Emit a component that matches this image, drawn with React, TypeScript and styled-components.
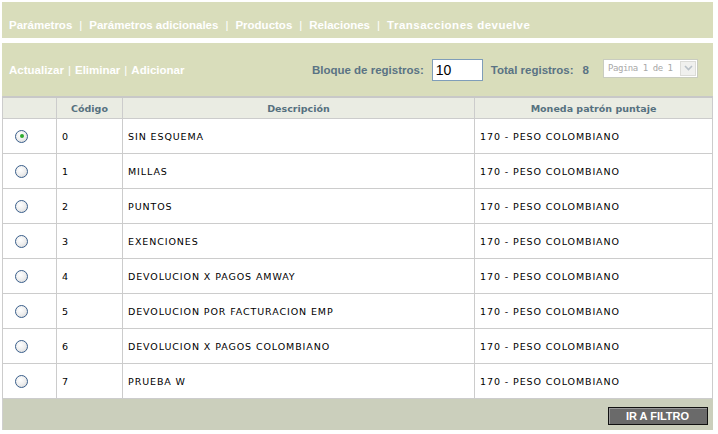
import React from "react";
import styled, { createGlobalStyle } from "styled-components";

const Global = createGlobalStyle`
  html, body { margin: 0; padding: 0; background: #ffffff; }
  body { font-family: "DejaVu Sans", Verdana, sans-serif; }
`;

const Page = styled.div`
  width: 711px;
  padding: 2px 0 0 2px;
  display: flex;
  flex-direction: column;
`;

const NavBar = styled.div`
  height: 36px;
  box-sizing: border-box;
  padding: 9px 0 0 7px;
  background: #d9ddbb;
  display: flex;
  align-items: center;
  font-family: "Liberation Sans", Arial, sans-serif;
  font-weight: bold;
  font-size: 11.5px;
  color: #ffffff;
  white-space: nowrap;
`;

const NavItem = styled.span<{ $wide?: boolean }>`
  letter-spacing: ${(p) => (p.$wide ? "0.5px" : "0")};
`;

const Sep = styled.span<{ $gap: number }>`
  margin: 0 ${(p) => p.$gap}px;
  font-weight: normal;
`;

const ToolBar = styled.div`
  margin-top: 5px;
  height: 53px;
  background: #d9ddbb;
  display: flex;
  align-items: center;
  padding-left: 7px;
  font-family: "Liberation Sans", Arial, sans-serif;
  font-weight: bold;
  font-size: 11.5px;
  white-space: nowrap;
`;

const Actions = styled.div`
  color: #ffffff;
  display: flex;
  align-items: center;
  flex: 1;
`;

const Label = styled.span`
  color: #5a7384;
  margin-right: 6px;
`;

const BlockInput = styled.input`
  width: 51px;
  height: 22px;
  box-sizing: border-box;
  border: 1px solid #7f9db9;
  padding: 0 3px;
  font-family: "Liberation Sans", Arial, sans-serif;
  font-size: 14px;
  color: #000;
  margin: 0 8px 0 2px;
  outline: none;
`;

const Count = styled.span`
  color: #5a7384;
  margin-left: 3px;
  margin-right: 14px;
`;

const PageSelect = styled.div`
  width: 95px;
  height: 19px;
  box-sizing: border-box;
  border: 1px solid #c9ccc0;
  background: #ffffff;
  display: flex;
  align-items: center;
  justify-content: space-between;
  font-family: "DejaVu Sans Mono", monospace;
  font-weight: normal;
  font-size: 9px;
  letter-spacing: -0.45px;
  color: #a8a8a8;
  padding-left: 4px;
  margin-right: 15px;
  margin-top: -3px;
  overflow: hidden;
`;

const Chevron = styled.div`
  width: 16px;
  height: 15px;
  flex: none;
  margin-right: 1px;
  background: #f0f0ee;
  border: 1px solid #dcdcd8;
  box-sizing: border-box;
  display: flex;
  align-items: center;
  justify-content: center;
`;

const Table = styled.table`
  width: 711px;
  border-collapse: collapse;
  table-layout: fixed;
  border-left: 1px solid #cfcfcf;
`;

const HeadCell = styled.th<{ $w?: number }>`
  ${(p) => (p.$w ? `width: ${p.$w}px;` : "")}
  height: 20px;
  background: #eaece3;
  border: 1px solid #cccccc;
  border-top: 2px solid #c8c8c8;
  font-family: "DejaVu Sans", Verdana, sans-serif;
  font-size: 9.5px;
  font-weight: bold;
  color: #56717f;
  text-align: center;
  padding: 0;
`;

const Cell = styled.td`
  height: 34px;
  border: 1px solid #cccccc;
  background: #ffffff;
  font-family: "DejaVu Sans", Verdana, sans-serif;
  font-size: 9.5px;
  letter-spacing: 0.9px;
  color: #000000;
  padding: 0 0 0 5px;
  white-space: nowrap;
`;

const RadioCell = styled.td`
  height: 34px;
  border: 1px solid #cccccc;
  background: #ffffff;
  text-align: left;
  padding: 0 0 0 12px;
`;

const Radio = styled.span<{ $on?: boolean }>`
  display: inline-block;
  width: 13px;
  height: 13px;
  box-sizing: border-box;
  border-radius: 50%;
  border: 1px solid #3a5f8c;
  background: radial-gradient(circle at 40% 35%, #ffffff 0%, #eeeeee 50%, #d2d2d2 100%);
  position: relative;
  vertical-align: middle;
  margin-top: -2px;
  &::after {
    content: "";
    display: ${(p) => (p.$on ? "block" : "none")};
    position: absolute;
    left: 3.5px;
    top: 3.5px;
    width: 4px;
    height: 4px;
    border-radius: 50%;
    background: #2eaa2e;
  }
`;

const FootCell = styled.td`
  height: 31px;
  background: #cbcfbc;
  text-align: right;
  padding: 0 5px 0 0;
`;

const FilterButton = styled.button`
  width: 100px;
  height: 18px;
  background: #6a6a6a;
  border: 1px solid #111111;
  box-shadow: inset 1px 1px 0 #9a9a9a;
  color: #ffffff;
  font-family: "Liberation Sans", Arial, sans-serif;
  font-weight: bold;
  font-size: 11px;
  padding: 0;
  cursor: pointer;
`;

const rows: [string, string][] = [
  ["0", "SIN ESQUEMA"],
  ["1", "MILLAS"],
  ["2", "PUNTOS"],
  ["3", "EXENCIONES"],
  ["4", "DEVOLUCION X PAGOS AMWAY"],
  ["5", "DEVOLUCION POR FACTURACION EMP"],
  ["6", "DEVOLUCION X PAGOS COLOMBIANO"],
  ["7", "PRUEBA W"],
];

const navItems = [
  "Parámetros",
  "Parámetros adicionales",
  "Productos",
  "Relaciones",
  "Transacciones devuelve",
];

export default function App() {
  return (
    <>
      <Global />
      <Page>
        <NavBar>
          {navItems.map((n, i) => (
            <React.Fragment key={n}>
              {i > 0 && <Sep $gap={7}>|</Sep>}
              <NavItem $wide={i === navItems.length - 1}>{n}</NavItem>
            </React.Fragment>
          ))}
        </NavBar>
        <ToolBar>
          <Actions>
            <span>Actualizar</span>
            <Sep $gap={4}>|</Sep>
            <span>Eliminar</span>
            <Sep $gap={4}>|</Sep>
            <span>Adicionar</span>
          </Actions>
          <Label>Bloque de registros:</Label>
          <BlockInput defaultValue="10" />
          <Label>Total registros:</Label>
          <Count>8</Count>
          <PageSelect>
            <span>Pagina 1 de 1</span>
            <Chevron>
              <svg width="9" height="6" viewBox="0 0 9 6">
                <path d="M1 1 L4.5 4.5 L8 1" fill="none" stroke="#b8c0c8" strokeWidth="1.6" />
              </svg>
            </Chevron>
          </PageSelect>
        </ToolBar>
        <Table>
          <thead>
            <tr>
              <HeadCell $w={53} />
              <HeadCell $w={65}>Código</HeadCell>
              <HeadCell $w={351}>Descripción</HeadCell>
              <HeadCell>Moneda patrón puntaje</HeadCell>
            </tr>
          </thead>
          <tbody>
            {rows.map(([code, desc], i) => (
              <tr key={code}>
                <RadioCell>
                  <Radio $on={i === 0} />
                </RadioCell>
                <Cell>{code}</Cell>
                <Cell>{desc}</Cell>
                <Cell>170 - PESO COLOMBIANO</Cell>
              </tr>
            ))}
            <tr>
              <FootCell colSpan={4}>
                <FilterButton>IR A FILTRO</FilterButton>
              </FootCell>
            </tr>
          </tbody>
        </Table>
      </Page>
    </>
  );
}
